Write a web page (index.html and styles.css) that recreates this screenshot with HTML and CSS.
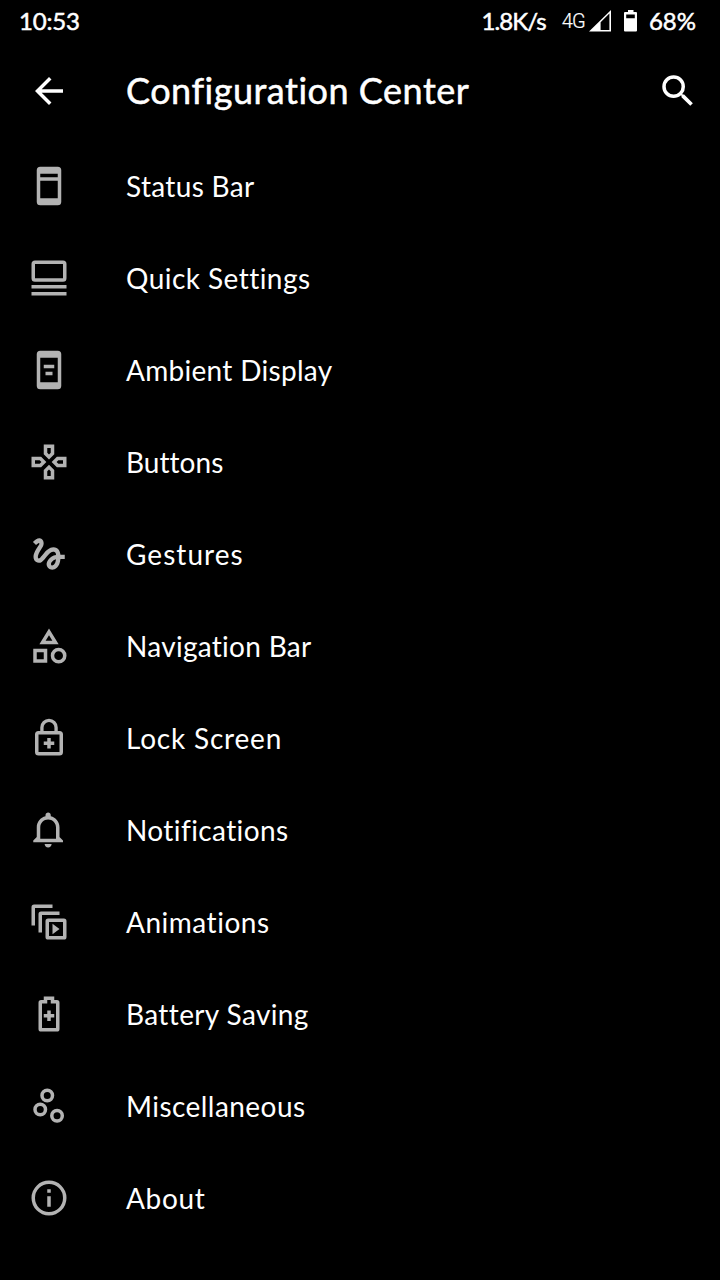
FILE: index.html
```
<!DOCTYPE html>
<html lang="en">
<head>
<meta charset="utf-8">
<title>Configuration Center</title>
<link rel="stylesheet" href="styles.css">
</head>
<body>
<header class="status-bar">
  <span class="clock">10:53</span>
  <div class="indicators">
    <span class="speed">1.8K/s</span>
    <span class="network">4G</span>
    <svg class="signal" viewBox="0 0 22 22"><path fill-rule="evenodd" d="M0 21.500L22 0v21.500zM20.400 3.600L11.600 12.200v7.800h8.800z"/></svg>
    <svg class="battery" viewBox="0 0 14 22"><path fill-rule="evenodd" d="M4 0h5.500v2H12q1 0 1 1v17.500q0 1-1 1H1q-1 0-1-1V3q0-1 1-1h3zM2.200 4.500v3.800h8.600V4.500z"/></svg>
    <span class="percent">68%</span>
  </div>
</header>
<div class="toolbar">
  <svg class="icon" viewBox="0 0 24 24"><path d="M20 11H7.830l5.590-5.590L12 4l-8 8 8 8 1.410-1.410L7.830 13H20z"/></svg>
  <h1 class="title">Configuration Center</h1>
  <svg class="icon" viewBox="0 0 24 24"><path d="M15.500 14h-.790l-.280-.270A6.471 6.471 0 0 0 16 9.500 6.500 6.500 0 1 0 9.500 16c1.610 0 3.090-.590 4.230-1.570l.270.280v.790l5 4.990L20.490 19zm-6 0a4.500 4.500 0 1 1 0-9 4.500 4.500 0 0 1 0 9z"/></svg>
</div>
<main class="list">
  <div class="row"><svg class="icon" viewBox="0 0 24 24"><path fill-rule="evenodd" d="M7 1h10a2 2 0 0 1 2 2v18a2 2 0 0 1-2 2H7a2 2 0 0 1-2-2V3a2 2 0 0 1 2-2zM7 5v2h10V5zM7 9v10h10V9z"/></svg><span class="label status">Status Bar</span></div>
  <div class="row"><svg class="icon" viewBox="0 0 24 24"><path fill-rule="evenodd" d="M4 2h16a2 2 0 0 1 2 2v8.200a2 2 0 0 1-2 2H4a2 2 0 0 1-2-2V4a2 2 0 0 1 2-2zM4 4v8.200h16V4zM2 16h20v2H2zM2 20h20v2H2z"/></svg><span class="label quick">Quick Settings</span></div>
  <div class="row"><svg class="icon" viewBox="0 0 24 24"><path fill-rule="evenodd" d="M7 1h10a2 2 0 0 1 2 2v18a2 2 0 0 1-2 2H7a2 2 0 0 1-2-2V3a2 2 0 0 1 2-2zM7 5v14h10V5zM9 9h6v2H9zM10 13h4v2h-4z"/></svg><span class="label ambient">Ambient Display</span></div>
  <div class="row"><svg class="icon" viewBox="0 0 24 24"><path d="M13 4v2.670l-1 1-1-1V4h2m7 7v2h-2.670l-1-1 1-1H20M6.670 11l1 1-1 1H4v-2h2.670M12 16.330l1 1V20h-2v-2.670l1-1M15 2H9v5.500l3 3 3-3V2zm7 7h-5.500l-3 3 3 3H22V9zM7.500 9H2v6h5.500l3-3-3-3zm4.500 4.500l-3 3V22h6v-5.500l-3-3z"/></svg><span class="label buttons">Buttons</span></div>
  <div class="row"><svg class="icon" viewBox="0 0 24 24"><path d="M4.590 6.890c.7-.71 1.400-1.350 1.710-1.220.5.2 0 1.030-.3 1.520-.25.42-2.860 3.890-2.860 6.310 0 1.280.48 2.340 1.340 2.980.75.56 1.740.73 2.640.46 1.070-.31 1.950-1.400 3.060-2.770 1.210-1.490 2.830-3.440 4.080-3.440 1.630 0 1.650 1.010 1.760 1.790-3.780.64-5.380 3.670-5.380 5.370 0 1.700 1.440 3.090 3.210 3.090 1.630 0 4.290-1.330 4.690-6.100H21v-2.500h-2.470c-.15-1.650-1.090-4.200-4.030-4.200-2.250 0-4.180 1.910-4.940 2.840-.58.73-2.060 2.480-2.290 2.720-.25.3-.68.84-1.110.84-.45 0-.72-.83-.36-1.920.35-1.090 1.400-2.860 1.850-3.520.78-1.140 1.300-1.920 1.300-3.280C8.950 3.690 7.310 3 6.440 3 5.120 3 3.970 4 3.720 4.250c-.36.36-.66.66-.88.93l1.750 1.710zm9.290 11.660c-.31 0-.74-.26-.74-.72 0-.6.73-2.200 2.870-2.760-.3 2.690-1.430 3.480-2.130 3.480z"/></svg><span class="label gestures">Gestures</span></div>
  <div class="row"><svg class="icon" viewBox="0 0 24 24"><path d="M12 2l-5.500 9h11L12 2zm0 3.840L13.930 9h-3.870L12 5.840zM17.500 13a4.500 4.500 0 1 0 0 9 4.500 4.500 0 0 0 0-9zm0 7a2.500 2.500 0 1 1 0-5 2.500 2.500 0 0 1 0 5zM3 21.500h8v-8H3v8zm2-6h4v4H5v-4z"/></svg><span class="label navigation">Navigation Bar</span></div>
  <div class="row"><svg class="icon" viewBox="0 0 24 24"><path fill-rule="evenodd" d="M18 8h-1V6A5 5 0 0 0 7 6v2H6a2 2 0 0 0-2 2v10a2 2 0 0 0 2 2h12a2 2 0 0 0 2-2V10a2 2 0 0 0-2-2zM8.900 6a3.100 3.100 0 0 1 6.200 0v2H8.900zM6 10h12v10H6zM11 12h2v2h2v2h-2v2h-2v-2H9v-2h2z"/></svg><span class="label lock">Lock Screen</span></div>
  <div class="row"><svg class="icon" viewBox="0 0 24 24"><path d="M11.500 22c1.100 0 2-.9 2-2h-4c0 1.100.9 2 2 2zm6.500-6v-5.500c0-3.070-2.130-5.640-5-6.320V3.500c0-.83-.67-1.500-1.500-1.500S10 2.670 10 3.500v.68c-2.870.68-5 3.250-5 6.320V16l-2 2v1h17v-1l-2-2zm-2 1H7v-6.500C7 8.010 9.010 6 11.500 6S16 8.010 16 10.500V17z"/></svg><span class="label notifications">Notifications</span></div>
  <div class="row"><svg class="icon" viewBox="0 0 24 24"><path fill-rule="evenodd" d="M3.500 2H14v2H4v10H2V3.500Q2 2 3.500 2zM7.500 6H18v2H8v10H6V7.500Q6 6 7.500 6zM11.500 10h9q1.500 0 1.500 1.500v9q0 1.500-1.500 1.500h-9q-1.500 0-1.500-1.500v-9q0-1.500 1.500-1.500zM12 12v8h8v-8zM14 13l4 3-4 3z"/></svg><span class="label animations">Animations</span></div>
  <div class="row"><svg class="icon" viewBox="0 0 24 24"><path fill-rule="evenodd" d="M9 2h6v2h1.500Q18 4 18 5.500v15q0 1.500-1.500 1.500h-9Q6 22 6 20.500v-15Q6 4 7.500 4H9zM8 6v14h8V6h-3V4h-2v2zM11 10h2v2h2v2h-2v2h-2v-2H9v-2h2z"/></svg><span class="label saving">Battery Saving</span></div>
  <div class="row"><svg class="icon outline" viewBox="0 0 24 24"><circle cx="11" cy="6" r="3"/><circle cx="7" cy="14" r="3"/><circle cx="16.600" cy="17.600" r="3"/></svg><span class="label misc">Miscellaneous</span></div>
  <div class="row"><svg class="icon" viewBox="0 0 24 24"><path d="M11 7h2v2h-2zm0 4h2v6h-2zm1-9a10 10 0 1 0 0 20 10 10 0 0 0 0-20zm0 18a8 8 0 1 1 0-16 8 8 0 0 1 0 16z"/></svg><span class="label about">About</span></div>
</main>
</body>
</html>
```

FILE: styles.css
```
* { box-sizing: border-box; }
body {
  margin: 0;
  width: 720px;
  height: 1280px;
  overflow: hidden;
  background: #000;
  color: #fff;
  font-family: Lato, "Open Sans", sans-serif;
}
.status-bar {
  height: 42px;
  padding: 0 24px 0 19px;
  display: flex;
  justify-content: space-between;
  align-items: center;
  font-size: 24px;
  -webkit-text-stroke: 0.5px #fff;
}
.indicators { display: flex; align-items: center; }
.clock { letter-spacing: -0.2px; padding-bottom: 1px; }
.speed { letter-spacing: -0.9px; padding-bottom: 2px; }
.network {
  margin-left: 16px;
  font-family: Roboto, sans-serif;
  font-size: 20px;
  font-weight: 300;
  letter-spacing: -0.8px;
  -webkit-text-stroke: 0.2px #fff;
}
.signal { width: 22px; height: 22px; margin-left: 4px; fill: #fff; }
.battery { width: 14px; height: 22px; margin: 0 11px 0 13px; fill: #fff; }
.percent { padding-bottom: 1px; }
.toolbar {
  height: 98px;
  padding: 0 21px 0 28px;
  display: flex;
  align-items: center;
}
.icon { width: 42px; height: 42px; flex: none; fill: currentColor; }
.title {
  flex: 1;
  margin: 0 0 2px 56px;
  font-size: 36px;
  font-weight: 400;
  letter-spacing: 0.51px;
  white-space: nowrap;
  -webkit-text-stroke: 0.5px #fff;
}
.list { display: flex; flex-direction: column; }
.row { height: 92px; display: flex; align-items: center; padding-left: 28px; }
.row .icon { color: #b3b3b3; }
.row .outline { fill: none; stroke: currentColor; stroke-width: 2; }
.label { margin-left: 56px; font-size: 28px; white-space: nowrap; }
.status { letter-spacing: 0.33px; }
.quick { letter-spacing: 0.45px; }
.ambient { letter-spacing: 0.3px; }
.buttons { letter-spacing: 0.05px; }
.gestures { letter-spacing: 1.05px; }
.navigation { letter-spacing: 0.29px; }
.lock { letter-spacing: 0.8px; }
.notifications { letter-spacing: 0.4px; }
.animations { letter-spacing: 0.52px; }
.saving { letter-spacing: 0.38px; }
.misc { letter-spacing: 0.45px; }
.about { letter-spacing: 0.65px; }
```
